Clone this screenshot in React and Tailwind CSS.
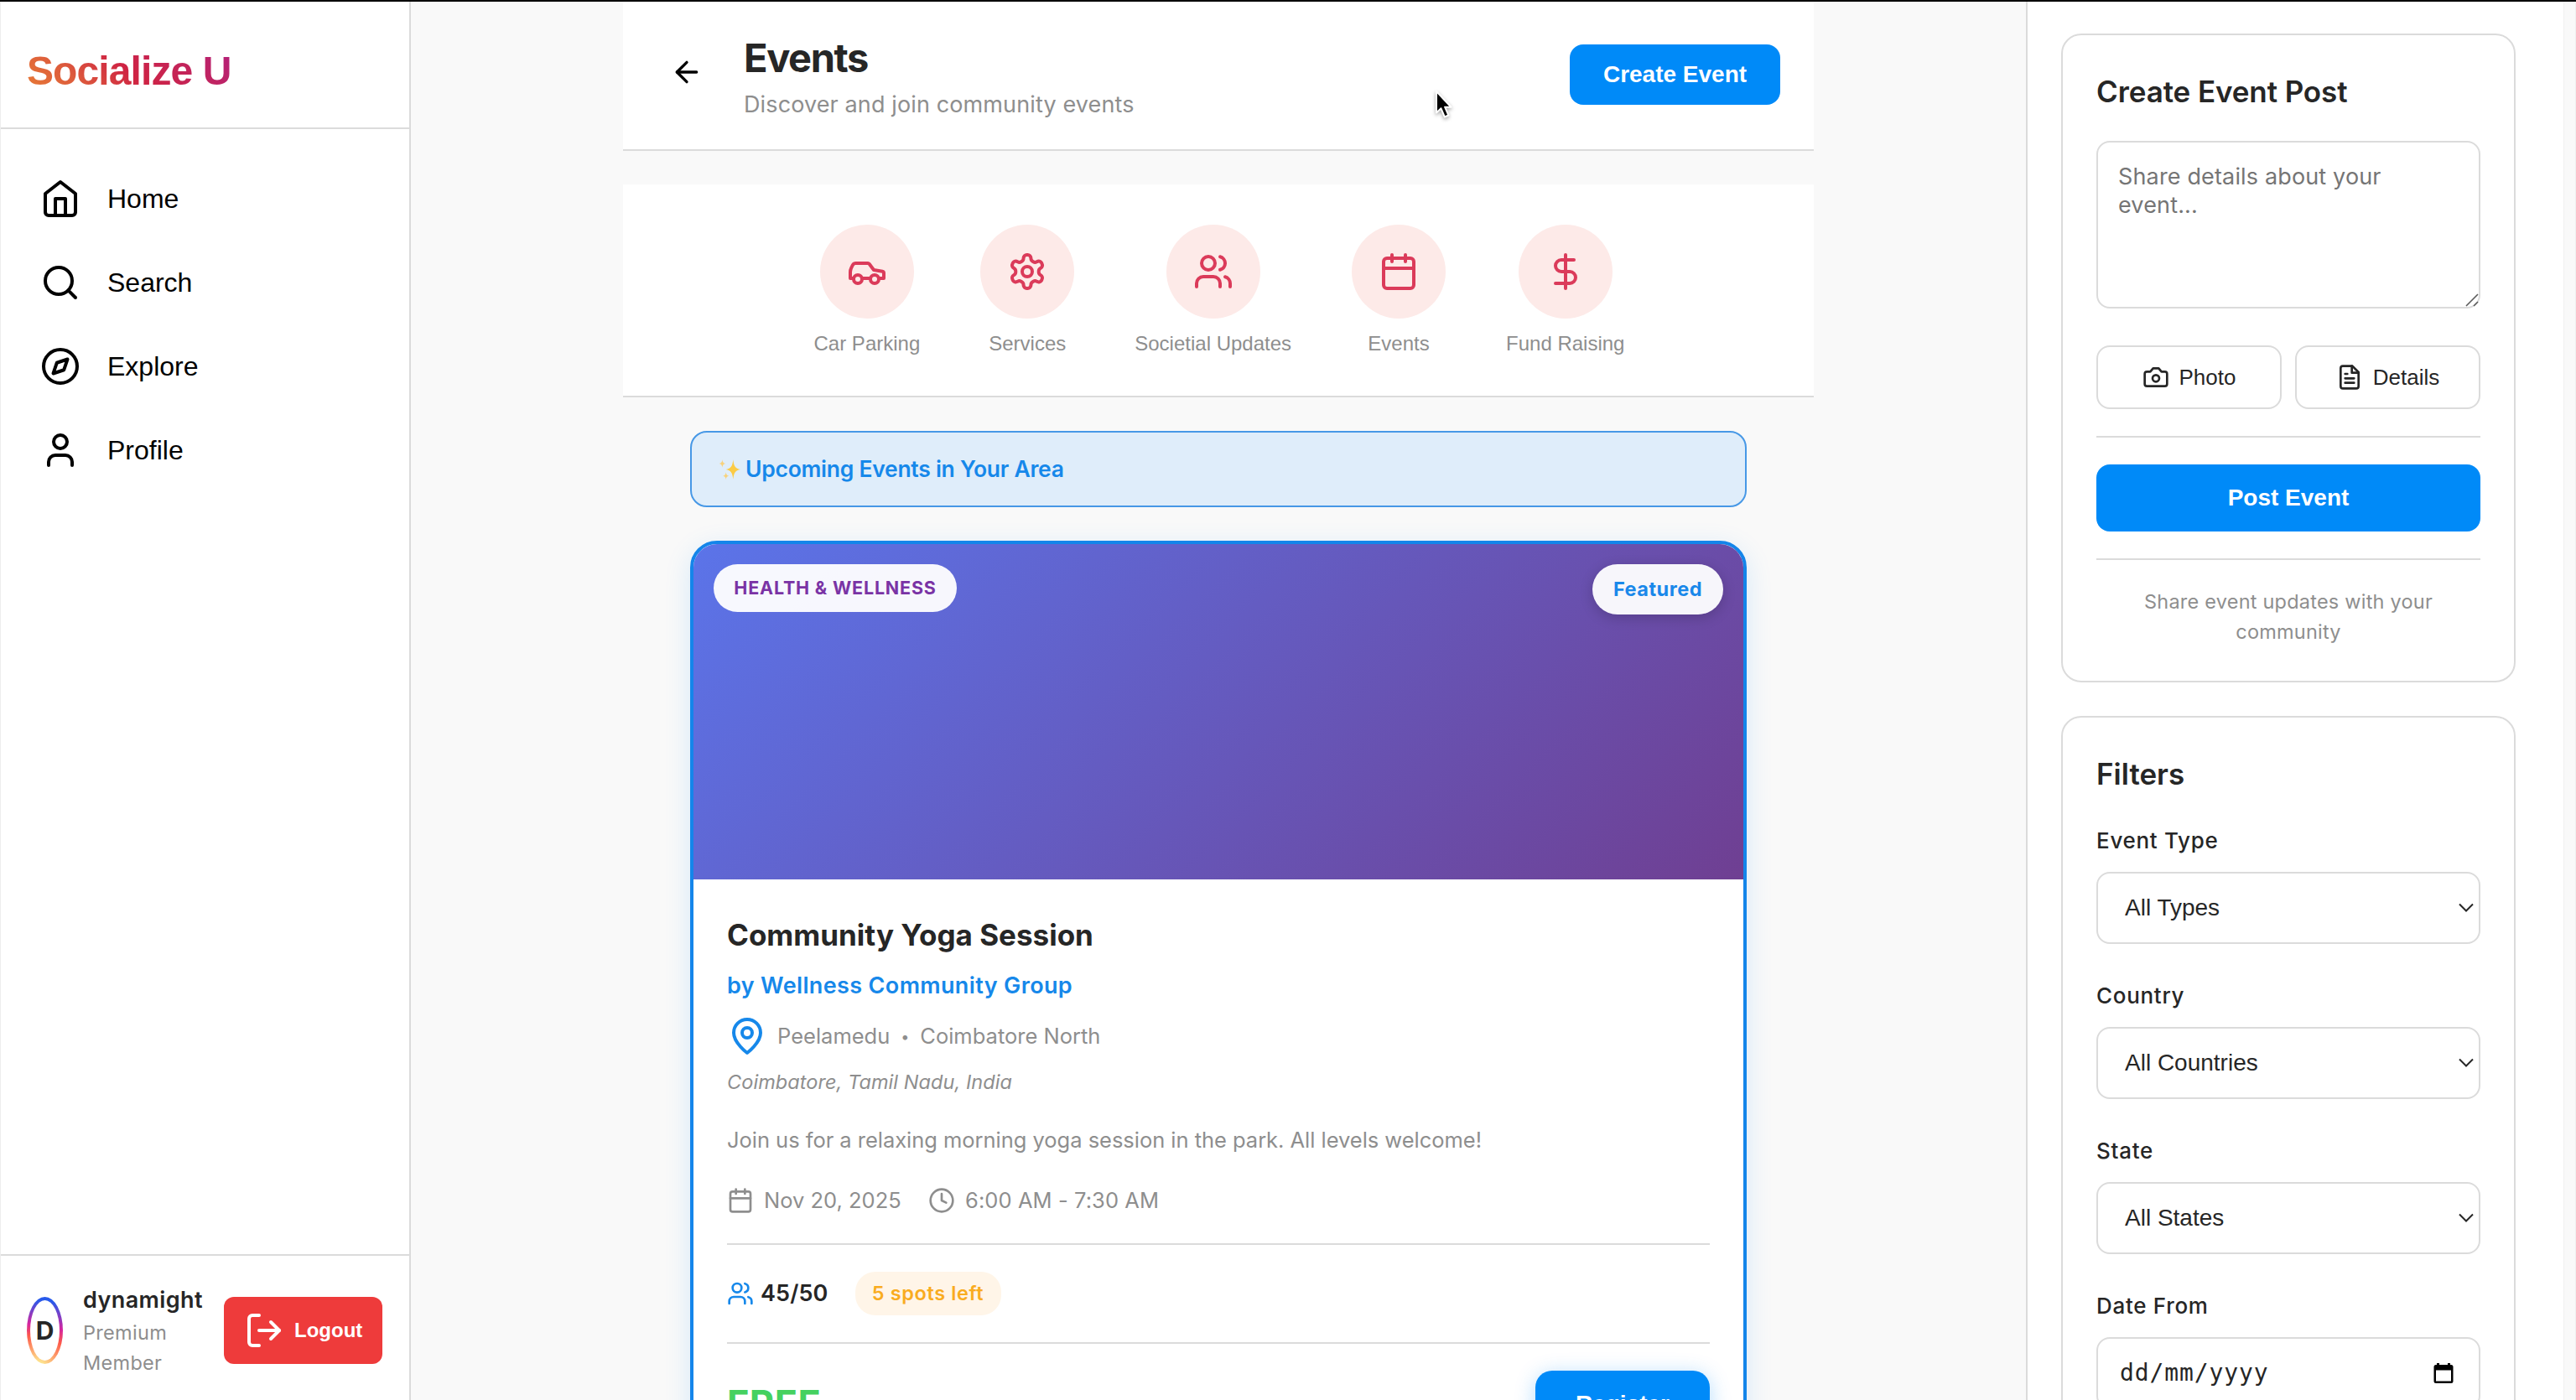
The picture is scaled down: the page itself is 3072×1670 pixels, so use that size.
const NAV_ITEMS = [
  { id: 'home', label: 'Home', icon: HomeIcon },
  { id: 'search', label: 'Search', icon: SearchIcon },
  { id: 'explore', label: 'Explore', icon: CompassIcon },
  { id: 'profile', label: 'Profile', icon: UserIcon },
]

const CATEGORIES = [
  { label: 'Car Parking', icon: CarIcon },
  { label: 'Services', icon: SettingsIcon },
  { label: 'Societial Updates', icon: UsersIcon },
  { label: 'Events', icon: CalendarIcon },
  { label: 'Fund Raising', icon: DollarIcon },
]

const FILTERS = [
  { label: 'Event Type', value: 'All Types' },
  { label: 'Country', value: 'All Countries' },
  { label: 'State', value: 'All States' },
]

function Icon({ className, children }) {
  return (
    <svg
      viewBox="0 0 24 24"
      fill="none"
      stroke="currentColor"
      strokeWidth="2"
      strokeLinecap="round"
      strokeLinejoin="round"
      className={`shrink-0 ${className}`}
    >
      {children}
    </svg>
  )
}

function HomeIcon({ className }) {
  return (
    <Icon className={className}>
      <path d="m3 9 9-7 9 7v11a2 2 0 0 1-2 2H5a2 2 0 0 1-2-2z" />
      <path d="M9 22V12h6v10" />
    </Icon>
  )
}

function SearchIcon({ className }) {
  return (
    <Icon className={className}>
      <circle cx="11" cy="11" r="8" />
      <path d="m21 21-4.3-4.3" />
    </Icon>
  )
}

function CompassIcon({ className }) {
  return (
    <Icon className={className}>
      <circle cx="12" cy="12" r="10" />
      <path d="m16.24 7.76-2.12 6.36-6.36 2.12 2.12-6.36 6.36-2.12z" />
    </Icon>
  )
}

function UserIcon({ className }) {
  return (
    <Icon className={className}>
      <path d="M19 21v-2a4 4 0 0 0-4-4H9a4 4 0 0 0-4 4v2" />
      <circle cx="12" cy="7" r="4" />
    </Icon>
  )
}

function LogOutIcon({ className }) {
  return (
    <Icon className={className}>
      <path d="M9 21H5a2 2 0 0 1-2-2V5a2 2 0 0 1 2-2h4" />
      <path d="m16 17 5-5-5-5" />
      <path d="M21 12H9" />
    </Icon>
  )
}

function ArrowLeftIcon({ className }) {
  return (
    <Icon className={className}>
      <path d="m12 19-7-7 7-7" />
      <path d="M19 12H5" />
    </Icon>
  )
}

function CarIcon({ className }) {
  return (
    <Icon className={className}>
      <path d="M14 16H9m10 0h3v-3.15a1 1 0 0 0-.84-.99L16 11l-2.7-3.6a1 1 0 0 0-.8-.4H5.24a2 2 0 0 0-1.8 1.1l-.8 1.63A6 6 0 0 0 2 12.42V16h2" />
      <circle cx="6.5" cy="16.5" r="2.5" />
      <circle cx="16.5" cy="16.5" r="2.5" />
    </Icon>
  )
}

function SettingsIcon({ className }) {
  return (
    <Icon className={className}>
      <path d="M12.22 2h-.44a2 2 0 0 0-2 2v.18a2 2 0 0 1-1 1.73l-.43.25a2 2 0 0 1-2 0l-.15-.08a2 2 0 0 0-2.73.73l-.22.38a2 2 0 0 0 .73 2.73l.15.1a2 2 0 0 1 1 1.72v.51a2 2 0 0 1-1 1.74l-.15.09a2 2 0 0 0-.73 2.73l.22.38a2 2 0 0 0 2.73.73l.15-.08a2 2 0 0 1 2 0l.43.25a2 2 0 0 1 1 1.73V20a2 2 0 0 0 2 2h.44a2 2 0 0 0 2-2v-.18a2 2 0 0 1 1-1.73l.43-.25a2 2 0 0 1 2 0l.15.08a2 2 0 0 0 2.73-.73l.22-.39a2 2 0 0 0-.73-2.73l-.15-.08a2 2 0 0 1-1-1.74v-.5a2 2 0 0 1 1-1.74l.15-.09a2 2 0 0 0 .73-2.73l-.22-.38a2 2 0 0 0-2.73-.73l-.15.08a2 2 0 0 1-2 0l-.43-.25a2 2 0 0 1-1-1.73V4a2 2 0 0 0-2-2z" />
      <circle cx="12" cy="12" r="3" />
    </Icon>
  )
}

function UsersIcon({ className }) {
  return (
    <Icon className={className}>
      <path d="M16 21v-2a4 4 0 0 0-4-4H6a4 4 0 0 0-4 4v2" />
      <circle cx="9" cy="7" r="4" />
      <path d="M22 21v-2a4 4 0 0 0-3-3.87" />
      <path d="M16 3.13a4 4 0 0 1 0 7.75" />
    </Icon>
  )
}

function CalendarIcon({ className }) {
  return (
    <Icon className={className}>
      <rect x="3" y="4" width="18" height="18" rx="2" />
      <path d="M16 2v4M8 2v4M3 10h18" />
    </Icon>
  )
}

function DollarIcon({ className }) {
  return (
    <Icon className={className}>
      <path d="M12 2v20" />
      <path d="M17 5H9.5a3.5 3.5 0 0 0 0 7h5a3.5 3.5 0 0 1 0 7H6" />
    </Icon>
  )
}

function MapPinIcon({ className }) {
  return (
    <Icon className={className}>
      <path d="M20 10c0 6-8 12-8 12s-8-6-8-12a8 8 0 0 1 16 0Z" />
      <circle cx="12" cy="10" r="3" />
    </Icon>
  )
}

function ClockIcon({ className }) {
  return (
    <Icon className={className}>
      <circle cx="12" cy="12" r="10" />
      <path d="M12 6v6l4 2" />
    </Icon>
  )
}

function CameraIcon({ className }) {
  return (
    <Icon className={className}>
      <path d="M14.5 4h-5L7 7H4a2 2 0 0 0-2 2v9a2 2 0 0 0 2 2h16a2 2 0 0 0 2-2V9a2 2 0 0 0-2-2h-3l-2.5-3z" />
      <circle cx="12" cy="13" r="3" />
    </Icon>
  )
}

function FileTextIcon({ className }) {
  return (
    <Icon className={className}>
      <path d="M14.5 2H6a2 2 0 0 0-2 2v16a2 2 0 0 0 2 2h12a2 2 0 0 0 2-2V7.5L14.5 2z" />
      <path d="M14 2v6h6M16 13H8M16 17H8M10 9H8" />
    </Icon>
  )
}

function Sparkles() {
  return (
    <svg viewBox="0 0 26 24" className="w-[28px] h-[26px] shrink-0">
      <path fill="#fbcb45" d="M17 1c.7 7 2.3 9.8 8 11-5.7 1.2-7.300 4-8 11-.7-7-2.300-9.800-8-11 5.700-1.200 7.300-4 8-11z" />
      <path fill="#f8d27c" d="M5 1c.3 2.800 1.100 4 3.500 4.500C6.100 6 5.300 7.200 5 10c-.3-2.800-1.100-4-3.500-4.500C3.900 5 4.700 3.800 5 1zM9 15c.3 2.500 1.100 3.600 3.300 4.200-2.200.5-3 1.500-3.300 4-.3-2.500-1.100-3.500-3.300-4C7.900 18.600 8.700 17.500 9 15z" />
    </svg>
  )
}

function Sidebar() {
  return (
    <aside className="w-[490px] shrink-0 bg-white border-l border-l-[#ededed] border-r-2 border-r-[#dbdbdb] flex flex-col">
      <div className="h-[152px] shrink-0 pt-4 px-[31px] border-b-2 border-[#dbdbdb] flex items-center">
        <h1 className="text-[48px] leading-[56px] font-bold tracking-[-0.9px] whitespace-nowrap text-transparent bg-clip-text bg-[linear-gradient(45deg,#e87c35_0%,#dd5c3c_25%,#cf2343_50%,#c2245c_75%,#b3207c_100%)]">
          Socialize U
        </h1>
      </div>

      <nav className="flex-1 pt-[33px]">
        {NAV_ITEMS.map(({ id, label, icon: NavIcon }) => (
          <a key={id} className="h-[100px] pl-[47px] flex items-center gap-8 text-[32px] text-black">
            <NavIcon className="size-12" />
            {label}
          </a>
        ))}
      </nav>

      {/* User */}
      <div className="h-[174px] shrink-0 pl-[31px] pt-8 border-t-2 border-[#dbdbdb] flex items-start">
        <div className="mt-[17px] w-[43px] h-20 shrink-0 rounded-[50%] p-1 bg-[radial-gradient(circle_at_30%_107%,#fdf497_0%,#fdf497_5%,#fd5949_45%,#d6249f_60%,#285AEB_90%)]">
          <div className="w-full h-full rounded-[50%] bg-white flex items-center justify-center font-[Inter] font-bold text-[30px] text-[#262626]">
            D
          </div>
        </div>
        <div className="ml-6 w-[168px] shrink-0 font-[Inter]">
          <p className="text-[27px] leading-[42px] tracking-[0.4px] font-semibold text-[#262626]">dynamight</p>
          <p className="w-[120px] text-[23.5px] leading-9 tracking-[0.3px] text-[#8e8e8e]">Premium Member</p>
        </div>
        <button className="mt-[17px] h-20 px-6 shrink-0 rounded-xl bg-[#ee3b3b] text-white flex items-center gap-3 text-[24px] font-bold">
          <LogOutIcon className="size-12" />
          Logout
        </button>
      </div>
    </aside>
  )
}

function EventCard() {
  return (
    <article className="mt-10 h-[1200px] rounded-[32px] border-4 border-[#1485ea] bg-white overflow-hidden shadow-[0_8px_32px_rgba(0,140,255,0.14)] font-[Inter]">
      <div className="h-[400px] p-6 flex items-start justify-between bg-[linear-gradient(135deg,#5b74e9_0%,#6f3f92_100%)]">
        <span className="h-[57px] w-[290px] rounded-full bg-white/95 flex items-center justify-center text-[21.5px] font-bold tracking-[0.8px] text-[#7a33a5] whitespace-nowrap">
          HEALTH &amp; WELLNESS
        </span>
        <span className="h-[60px] w-[156px] rounded-full bg-white/95 flex items-center justify-center text-[23.5px] tracking-[0.5px] font-bold text-[#1a88ea] shadow-[0_4px_16px_rgba(0,0,0,0.18)]">
          Featured
        </span>
      </div>

      <div className="px-10 pt-[42px] text-[#8e8e8e] whitespace-nowrap">
        <h2 className="text-[35px] leading-[48px] font-bold text-[#262626]">Community Yoga Session</h2>
        <p className="mt-[19px] text-[27px] leading-9 tracking-[0.36px] font-semibold text-[#1688ea]">by Wellness Community Group</p>
        <div className="mt-[18px] h-12 flex items-center text-[25.5px]">
          <MapPinIcon className="size-12 text-[#1688ea]" />
          <span className="ml-3">Peelamedu</span>
          <span className="w-9 text-center text-[18px]">•</span>
          <span>Coimbatore North</span>
        </div>
        <p className="mt-[13px] text-[23.5px] leading-9 tracking-[0.06px] italic">Coimbatore, Tamil Nadu, India</p>
        <p className="mt-[31px] text-[25.5px] leading-10 tracking-[-0.03px]">
          Join us for a relaxing morning yoga session in the park. All levels welcome!
        </p>
        <div className="mt-8 h-10 flex items-center text-[25.5px]">
          <CalendarIcon className="size-8" />
          <span className="ml-3 w-[176px]">Nov 20, 2025</span>
          <ClockIcon className="ml-5 size-8" />
          <span className="ml-3 tracking-[0.08px]">6:00 AM - 7:30 AM</span>
        </div>

        <div className="mt-[31px] h-[120px] border-y-2 border-[#dbdbdb] flex items-center">
          <UsersIcon className="size-8 text-[#1688ea]" />
          <span className="ml-2 text-[27px] tracking-[0.1px] font-semibold text-[#262626]">45/50</span>
          <span className="ml-8 h-[52px] w-[174px] rounded-3xl bg-[#fff5e8] flex items-center justify-center text-[23.5px] tracking-[0.6px] font-semibold text-[#f9ac1f]">
            5 spots left
          </span>
        </div>

        <div className="mt-8 flex items-center justify-between">
          <span className="text-[45px] leading-[48px] tracking-[0.4px] font-bold text-[#45d160]">FREE</span>
          <button className="h-20 px-12 rounded-[20px] bg-[#008af8] text-white text-[28px] font-bold font-['Liberation_Sans'] shadow-[0_4px_24px_rgba(0,138,248,0.3)]">
            Register
          </button>
        </div>
      </div>
    </article>
  )
}

function Main() {
  return (
    <main className="flex-1 px-[253px] flex flex-col">
      <header className="h-[178px] shrink-0 bg-white border-b-2 border-[#dbdbdb] px-10 flex items-center justify-between">
        <div className="flex items-center">
          <button className="p-4 mb-2 text-black">
            <ArrowLeftIcon className="size-10" />
          </button>
          <div className="ml-8 pt-1.5 font-[Inter]">
            <h1 className="text-[47px] leading-[56px] tracking-[-1.4px] font-bold text-[#262626]">Events</h1>
            <p className="mt-2 text-[27px] leading-10 tracking-[0.12px] text-[#8e8e8e]">Discover and join community events</p>
          </div>
        </div>
        <button className="mb-0.5 h-[72px] w-[251px] rounded-2xl bg-[#008af8] text-white text-[28px] font-bold">
          Create Event
        </button>
      </header>

      <section className="mt-10 h-[254px] shrink-0 pt-12 pl-0.5 bg-white border-b-2 border-[#dbdbdb] flex justify-center gap-[72px]">
        {CATEGORIES.map(({ label, icon: CategoryIcon }) => (
          <div key={label} className="flex flex-col items-center gap-4">
            <div className="size-28 rounded-full bg-[#fdeae8] flex items-center justify-center text-[#db3b5a]">
              <CategoryIcon className="size-12" />
            </div>
            <span className="text-[24px] leading-[27px] text-[#8e8e8e] whitespace-nowrap">{label}</span>
          </div>
        ))}
      </section>

      <div className="px-20 pt-10">
        <div className="h-[91px] pl-[31px] rounded-[20px] border-2 border-[#4798e6] bg-[#dfedfa] flex items-center gap-[5px] font-[Inter] text-[26.5px] tracking-[-0.27px] font-semibold text-[#1688ea]">
          <Sparkles />
          Upcoming Events in Your Area
        </div>
        <EventCard />
      </div>
    </main>
  )
}

function CreatePostCard() {
  return (
    <section className="h-[774px] shrink-0 px-10 pt-[45px] rounded-3xl border-2 border-[#dbdbdb]">
      <h2 className="font-[Inter] text-[35px] leading-[44px] tracking-[-0.1px] font-semibold text-[#262626] whitespace-nowrap">Create Event Post</h2>
      <div className="relative mt-[37px] h-[200px]">
        <textarea
          className="block w-full h-full resize-none rounded-2xl border-2 border-[#dbdbdb] px-6 pt-6 font-[Inter] text-[27px] leading-[34px] tracking-[0.15px] placeholder:text-[#757575]"
          placeholder="Share details about your event..."
        />
        <svg viewBox="0 0 16 16" className="absolute right-0.5 bottom-0.5 size-4" stroke="#5c5c5c" strokeWidth="1.6">
          <path d="M1 15 15 1M10 15l5-5" />
        </svg>
      </div>
      <div className="mt-11 grid grid-cols-2 gap-4 text-[26px] text-[#262626]">
        <button className="h-[76px] rounded-2xl border-2 border-[#dbdbdb] flex items-center justify-center gap-3">
          <CameraIcon className="size-8" />
          Photo
        </button>
        <button className="h-[76px] rounded-2xl border-2 border-[#dbdbdb] flex items-center justify-center gap-3">
          <FileTextIcon className="size-8" />
          Details
        </button>
      </div>
      <div className="mt-8 py-8 border-y-2 border-[#dbdbdb]">
        <button className="block h-20 w-full rounded-2xl bg-[#008af8] text-white text-[28px] font-bold">Post Event</button>
      </div>
      <p className="mt-8 px-10 text-center font-[Inter] text-[23.5px] leading-9 tracking-[0.22px] text-[#8e8e8e]">
        Share event updates with your community
      </p>
    </section>
  )
}

function FiltersCard() {
  return (
    <section className="mt-10 h-[1100px] shrink-0 px-10 pt-[45px] rounded-3xl border-2 border-[#dbdbdb] text-[#262626]">
      <h2 className="mb-[39px] font-[Inter] text-[35px] leading-[44px] font-semibold">Filters</h2>
      {FILTERS.map(filter => (
        <div key={filter.label} className="h-[185px]">
          <label className="block font-[Inter] text-[26px] leading-[38px] tracking-[0.7px] font-medium">{filter.label}</label>
          <div className="relative mt-[18px]">
            <select className="block w-full h-[86px] px-8 appearance-none rounded-2xl border-2 border-[#dbdbdb] bg-white text-[28px]">
              <option>{filter.value}</option>
            </select>
            <svg viewBox="0 0 18 12" fill="none" stroke="#262626" strokeWidth="2" className="absolute right-2 top-[37px] w-[18px] h-3">
              <path d="m1 1.500 8 8 8-8" />
            </svg>
          </div>
        </div>
      ))}
      <label className="block font-[Inter] text-[26px] leading-[38px] tracking-[0.7px] font-medium">Date From</label>
      <div className="mt-[18px] h-[86px] pl-[26px] pr-[30px] rounded-2xl border-2 border-[#dbdbdb] flex items-center justify-between">
        <span className="font-['DejaVu_Sans_Mono'] text-[28px] tracking-[0.9px]">dd/mm/yyyy</span>
        <svg viewBox="0 0 24 26" className="w-6 h-[26px]">
          <path
            fill="#000"
            fillRule="evenodd"
            d="M4 1h3v2h10V1h3v2h1a2.500 2.500 0 0 1 2.500 2.500v17A2.500 2.500 0 0 1 21 25H3A2.500 2.500 0 0 1 .5 22.500v-17A2.500 2.500 0 0 1 3 3h1zM3 9.500v13h18v-13z"
          />
        </svg>
      </div>
    </section>
  )
}

export default function App() {
  return (
    <div className="relative w-[3072px] h-[1670px] overflow-hidden flex flex-col bg-[#f9f9f9] font-['Liberation_Sans',Arial,sans-serif]">
      <div className="h-0.5 shrink-0 bg-black" />
      <div className="flex-1 min-h-0 flex">
        <Sidebar />
        <Main />
        <aside className="w-[656px] shrink-0 border-l-2 border-[#dbdbdb] flex overflow-hidden">
          <div className="w-[639px] pl-10 pr-[57px] pt-[38px] bg-white flex flex-col">
            <CreatePostCard />
            <FiltersCard />
          </div>
          <div className="flex-1 bg-[#f9f9f9] border-l border-r border-[#f0f0f0]" />
        </aside>
      </div>

      {/* Pointer */}
      <svg viewBox="0 0 24 36" className="absolute left-[1711px] top-[107px] w-6 h-9 drop-shadow-[0_2px_2px_rgba(0,0,0,0.35)]">
        <path fill="#000" stroke="#fff" strokeWidth="2" strokeLinejoin="round" d="M2 2v25.500l5.500-5.200 4.300 10.200 4.600-2-4.300-9.800h7.400z" />
      </svg>
    </div>
  )
}
